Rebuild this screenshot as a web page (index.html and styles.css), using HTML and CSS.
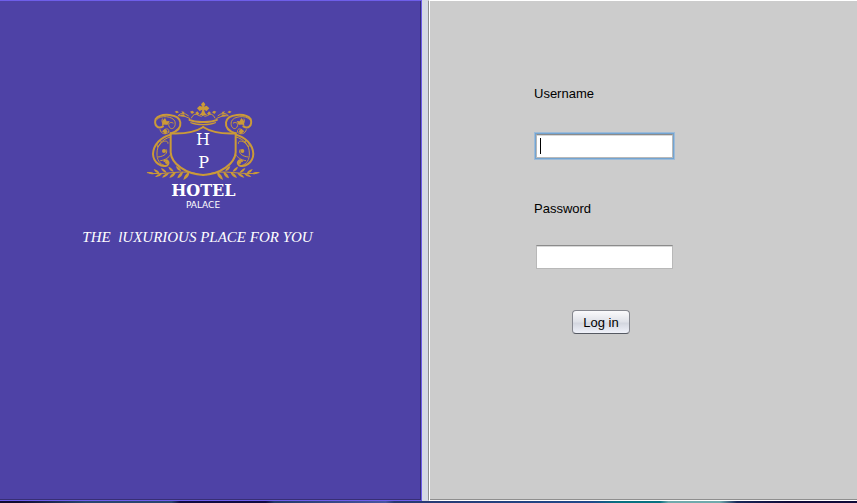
FILE: index.html
```html
<!DOCTYPE html>
<html lang="en">
<head>
<meta charset="utf-8">
<title>Hotel Palace - Log in</title>
<link rel="stylesheet" href="styles.css">
</head>
<body>
<main class="window">
  <section class="brand">
    <svg class="logo" viewBox="0 0 384 360" role="img" aria-label="Hotel Palace">
      <defs>
        <g id="half">
          <path class="line" d="M190 96C165 112 132 117 92 115V172C94 206 138 238 190 240"/>
          <path class="line" d="M92 115C112 109 123 97 121 82C117 55 62 53 47 72C41 91 54 104 69 94"/>
          <path class="thin" d="M50 74C60 59 100 63 105 80C109 98 94 107 88 96C82 85 91 79 99 84M67 72C63 82 69 91 81 87M60 104C63 117 77 121 87 111M75 103C82 99 89 104 86 110"/>
          <path class="line" d="M91 119C65 126 40 147 39 177C40 203 65 219 82 211C92 202 79 191 73 198"/>
          <path class="thin" d="M91 126C67 132 51 151 51 174C50 194 59 207 72 211M53 156C48 143 55 136 63 137C65 145 58 151 53 156M55 186C73 184 85 174 79 164M62 197C76 195 88 187 91 179M65 143C75 134 86 139 84 145"/>
          <path class="fill" d="M66 168a6 6 0 1 0 12 0a6 6 0 1 0-12 0M67 78l8-9 5 10 9-1-6 11-9-2-8 6zM66 109l9-8 8 8-6 9zM75 202a5 5 0 1 0 10 0a5 5 0 1 0-10 0"/>
          <path class="thin" d="M22 233C70 244 126 219 180 239"/>
          <path class="fill" d="M22 232q12-4 22 4q-12 5-22-4M41 222q15 3 18 14q-14-2-18-14M63 219q14 4 17 15q-14-3-17-15M85 215q13 4 16 15q-13-2-16-15M108 213q14 5 15 16q-13-3-15-16M45 246q9-12 21-9q-8 11-21 9M66 248q8-14 21-14q-7 13-21 14M88 249q5-15 20-18q-4 15-20 18M112 250q2-15 17-20q-1 15-17 20M130 255q2-17 18-24q0 17-18 24"/>
          <path class="fill" d="M146 71Q166 79 190 78V84Q164 84 146 77ZM151 81Q170 87 190 87V91Q163 91 151 84Z"/>
          <path class="thin" d="M149 70Q133 60 114 62Q127 48 145 62M154 69Q163 50 177 62Q185 67 190 60"/>
          <path class="fill" d="M104 50l7-3 6 5-7 3zM124 49l10 2-5 6zM150 50l7-3 6 5-7 5zM166 54l6-5 6 7-6 5zM120 60l11-2 5 7-12-1z"/>
        </g>
      </defs>
      <use href="#half"/>
      <use href="#half" transform="translate(379 0) scale(-1 1)"/>
      <path class="fill" d="M190 20l6 8-4 7 8-3 8 8-8 8-8-4 3 10 6 6H178l6-6 3-10-8 4-8-8 8-8 8 3-4-7z"/>
      <text class="initial" x="189" y="149">H</text>
      <text class="initial" x="191" y="218">P</text>
      <text class="name" x="190" y="304">HOTEL</text>
      <text class="place" x="189" y="340">PALACE</text>
    </svg>
    <p class="tagline">THE  lUXURIOUS PLACE FOR YOU</p>
  </section>
  <div class="divider"></div>
  <section class="login">
    <form class="form">
      <label class="label" for="username">Username</label>
      <div class="field focused"><input class="input" id="username" type="text"><span class="caret"></span></div>
      <label class="label" for="password">Password</label>
      <div class="field"><input class="input" id="password" type="password"></div>
      <button class="button" type="button">Log in</button>
    </form>
  </section>
</main>
<div class="desktop"></div>
</body>
</html>
```
FILE: styles.css
```css
* { box-sizing: border-box; }
body {
  margin: 0;
  min-height: 100vh;
  display: flex;
  flex-direction: column;
  font: 13px/16px "Liberation Sans", Arial, sans-serif;
  color: #000;
}
.window {
  flex: 1;
  display: grid;
  grid-template-columns: 422fr 6px 429fr;
  background: #d6d9e4;
}
.brand {
  display: flex;
  flex-direction: column;
  align-items: center;
  padding: 94px 14px 0 0;
  background: #4e42a6;
  border-top: 1px solid #6e5eea;
  border-right: 1px solid #6e5eea;
  border-bottom: 1px solid #6e5eea;
  box-shadow: inset -1px -1px #372e74;
}
.logo { width: 128px; height: 120px; }
.line, .thin { fill: none; stroke: #cb9a38; stroke-linecap: round; }
.line { stroke-width: 6px; }
.thin { stroke-width: 3px; }
.fill { fill: #cb9a38; }
.initial, .name, .place { fill: #fff; text-anchor: middle; }
.initial { font: 48px "DejaVu Serif", serif; }
.name { font: bold 48px "DejaVu Serif", serif; }
.place { font: 27px "DejaVu Sans", sans-serif; }
.tagline {
  margin: 13px 0 0;
  padding-right: 12px;
  white-space: pre;
  color: #fff;
  font: italic 15px/18px "Liberation Serif", serif;
}
.divider { background: #d6d9e4; }
.login {
  background: #ccc;
  border: solid;
  border-width: 1px 0 1px 1px;
  border-color: #fff #fff #fff #8e8e8e;
  box-shadow: inset 1px 0 #fff, inset 0 -1px #8e8e8e;
}
.form {
  display: flex;
  flex-direction: column;
  align-items: flex-start;
  padding: 85px 0 0 105px;
}
.label { height: 16px; }
.field {
  position: relative;
  width: 137px;
  height: 24px;
  margin: 28px 0 41px 2px;
}
.focused { margin: 32px 0 43px 2px; }
.input {
  display: block;
  width: 100%;
  height: 100%;
  padding: 2px 5px;
  border: 1px solid #b8b8b8;
  border-top-color: #8b8b8b;
  border-radius: 0;
  outline: none;
  background: #fff;
  box-shadow: inset 0 1px #d8d8d8;
  font: inherit;
}
.focused .input { box-shadow: 0 0 0 1px #73a4d1, 0 0 0 2px #9dbbd8, inset 0 1px #d8d8d8; }
.caret {
  position: absolute;
  left: 4px;
  top: 4px;
  width: 1px;
  height: 16px;
  background: #000;
}
.button {
  width: 58px;
  height: 24px;
  margin-left: 38px;
  padding: 1px 0 0;
  border: 1px solid #85878f;
  border-bottom-color: #555962;
  border-radius: 4px;
  background: linear-gradient(#fafafc, #dfe1e8 50%, #d3d6df 55%, #f0f2fa);
  font: inherit;
  color: #000;
}
.desktop {
  height: 2px;
  background: linear-gradient(90deg, #100a30 0 2%, #29456f 10%, #29456f 20%, #100a40 21% 31%, #243968 32%, #4855a0 45%, #283870 46%, #20498a 69%, #087080 72% 77%, #70a9ac 78% 84%, #182858 86%, #100a38 92%);
}
```
